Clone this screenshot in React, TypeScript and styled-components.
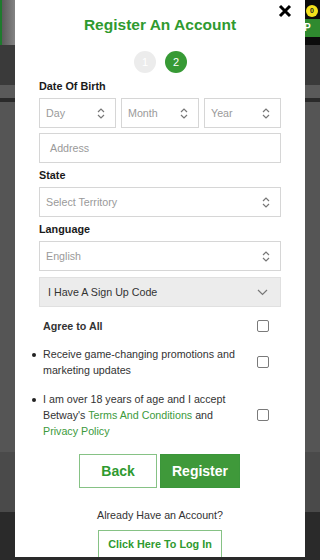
import React from "react";
import styled, { createGlobalStyle } from "styled-components";

const GlobalStyle = createGlobalStyle`
  html, body {
    margin: 0;
    padding: 0;
    background: #2a2a2a;
    font-family: "Liberation Sans", Arial, sans-serif;
  }
`;

const green = "#2f9a2f";

const Page = styled.div`
  position: relative;
  width: 320px;
  height: 560px;
  overflow: hidden;
  background: #2b2b2b;
`;

const Backdrop = styled.div`
  display: flex;
  flex-direction: column;
  height: 100%;
`;

const TopBar = styled.div`
  height: 45px;
  display: flex;
  justify-content: space-between;
  background: #0c0c0c;
`;

const LeftCard = styled.div`
  width: 15px;
  border-left: 2px solid #1d7a2d;
  background: linear-gradient(90deg, #5a5a5a, #8a8a8a);
`;

const JoinButton = styled.div`
  position: relative;
  width: 16px;
  margin-top: 19px;
  height: 18px;
  background: #2f8a2f;
  color: #fff;
  font-weight: bold;
  font-size: 10px;
  line-height: 18px;
`;

const Badge = styled.span`
  position: absolute;
  top: -14px;
  right: 2px;
  width: 12px;
  height: 12px;
  border-radius: 50%;
  background: #f4e21c;
  color: #222;
  font-size: 7px;
  line-height: 12px;
  text-align: center;
`;

const Band = styled.div<{ $h: number; $bg: string }>`
  height: ${({ $h }) => $h}px;
  background: ${({ $bg }) => $bg};
`;

const Modal = styled.div`
  position: absolute;
  top: 0;
  left: 15px;
  width: 290px;
  height: 557px;
  overflow: hidden;
  background: #fff;
  box-sizing: border-box;
  padding: 15px 24px 0;
`;

const Close = styled.button`
  position: absolute;
  top: 4px;
  right: 13px;
  width: 14px;
  height: 14px;
  padding: 0;
  border: 0;
  background: none;
  display: flex;
`;

const Title = styled.h1`
  margin: 0;
  font-size: 15.5px;
  line-height: 20px;
  font-weight: bold;
  color: ${green};
  text-align: center;
`;

const Steps = styled.div`
  margin-top: 16px;
  display: flex;
  justify-content: center;
  gap: 9px;
  padding-left: 1px;
`;

const Step = styled.span<{ $active?: boolean }>`
  width: 22px;
  height: 22px;
  border-radius: 50%;
  background: ${({ $active }) => ($active ? "#379a35" : "#ececec")};
  color: #fff;
  font-size: 11px;
  line-height: 22px;
  text-align: center;
`;

const Label = styled.div<{ $top?: number }>`
  margin-top: ${({ $top }) => $top ?? 4}px;
  margin-bottom: 4px;
  font-size: 10.8px;
  line-height: 16px;
  font-weight: bold;
  color: #1a1a1a;
`;

const Row = styled.div`
  display: grid;
  grid-template-columns: 77px 78px 77px;
  gap: 5px;
`;

const Field = styled.div<{ $top?: number; $pad?: number }>`
  margin-top: ${({ $top }) => $top ?? 0}px;
  height: 30px;
  box-sizing: border-box;
  border: 1px solid #d6d6d6;
  padding: 0 10px 0 ${({ $pad }) => $pad ?? 6}px;
  display: flex;
  align-items: center;
  justify-content: space-between;
  font-size: 10.7px;
  color: #9a9a9a;
`;

const CodeBox = styled(Field)`
  background: #ececec;
  border-color: #e0e0e0;
  color: #333;
  padding: 0 12px 0 8px;
`;

const Consents = styled.div`
  margin-top: 11px;
`;

const ConsentRow = styled.div<{ $top?: number }>`
  display: flex;
  align-items: center;
  justify-content: space-between;
  margin-top: ${({ $top }) => $top ?? 0}px;
  padding: 0 12px 0 4px;
`;

const ConsentText = styled.div<{ $bold?: boolean; $bullet?: boolean }>`
  position: relative;
  width: 205px;
  font-size: 10.7px;
  line-height: 16px;
  color: #333;
  font-weight: ${({ $bold }) => ($bold ? "bold" : "normal")};
  ${({ $bullet }) =>
    $bullet
      ? `&::before {
    content: "";
    position: absolute;
    left: -11px;
    top: 7px;
    width: 4px;
    height: 4px;
    border-radius: 50%;
    background: #222;
  }`
      : ""}
`;

const Link = styled.span`
  color: #3c9a3c;
`;

const Check = styled.span`
  width: 10px;
  height: 10px;
  border: 1px solid #7a7a7a;
  border-radius: 2px;
  flex-shrink: 0;
`;

const Buttons = styled.div`
  margin-top: 15px;
  display: flex;
  justify-content: center;
  gap: 3px;
  padding-right: 1px;
`;

const Btn = styled.button<{ $primary?: boolean; $w: number }>`
  width: ${({ $w }) => $w}px;
  height: 34px;
  box-sizing: border-box;
  border: 1px solid ${({ $primary }) => ($primary ? "#3b963a" : "#86c285")};
  background: ${({ $primary }) => ($primary ? "#3f993a" : "#fff")};
  color: ${({ $primary }) => ($primary ? "#fff" : green)};
  font-family: inherit;
  font-size: 14px;
  font-weight: bold;
  padding: 0;
`;

const Already = styled.div`
  margin-top: 19px;
  text-align: center;
  font-size: 10.7px;
  line-height: 16px;
  color: #333;
`;

const LoginWrap = styled.div`
  margin-top: 7px;
  display: flex;
  justify-content: center;
`;

const LoginBtn = styled.button`
  width: 124px;
  height: 30px;
  box-sizing: border-box;
  border: 1px solid #86c285;
  background: #fff;
  color: ${green};
  font-family: inherit;
  font-size: 10.8px;
  font-weight: bold;
  padding: 0 0 3px;
`;

const UpDown = () => (
  <svg width="8" height="11" viewBox="0 0 8 11" fill="none" stroke="#777" strokeWidth="1.2">
    <path d="M1 4 L4 1 L7 4" />
    <path d="M1 7 L4 10 L7 7" />
  </svg>
);

const ChevronDown = () => (
  <svg width="11" height="7" viewBox="0 0 11 7" fill="none" stroke="#777" strokeWidth="1.2">
    <path d="M1 1 L5.5 5.5 L10 1" />
  </svg>
);

const App = () => (
  <>
    <GlobalStyle />
    <Page>
      <Backdrop>
        <TopBar>
          <LeftCard />
          <JoinButton>
            P<Badge>0</Badge>
          </JoinButton>
        </TopBar>
        <Band $h={40} $bg="#3a3a3a" />
        <Band $h={13} $bg="#5a5a5a" />
        <Band $h={4} $bg="#2a2a2a" />
        <Band $h={350} $bg="#555" />
        <Band $h={60} $bg="#4a4a4a" />
        <Band $h={48} $bg="#2a2a2a" />
      </Backdrop>
      <Modal>
        <Close aria-label="close">
          <svg width="14" height="14" viewBox="0 0 14 14" stroke="#000" strokeWidth="3">
            <path d="M2 2 L12 12 M12 2 L2 12" />
          </svg>
        </Close>
        <Title>Register An Account</Title>
        <Steps>
          <Step>1</Step>
          <Step $active>2</Step>
        </Steps>
        <Label $top={5}>Date Of Birth</Label>
        <Row>
          <Field>
            Day <UpDown />
          </Field>
          <Field>
            Month <UpDown />
          </Field>
          <Field>
            Year <UpDown />
          </Field>
        </Row>
        <Field $top={5} $pad={10}>
          Address
        </Field>
        <Label>State</Label>
        <Field>
          Select Territory <UpDown />
        </Field>
        <Label>Language</Label>
        <Field>
          English <UpDown />
        </Field>
        <CodeBox $top={6}>
          I Have A Sign Up Code <ChevronDown />
        </CodeBox>
        <Consents>
          <ConsentRow>
            <ConsentText $bold>Agree to All</ConsentText>
            <Check />
          </ConsentRow>
          <ConsentRow $top={12}>
            <ConsentText $bullet>Receive game-changing promotions and marketing updates</ConsentText>
            <Check />
          </ConsentRow>
          <ConsentRow $top={13}>
            <ConsentText $bullet>
              I am over 18 years of age and I accept Betway's <Link>Terms And Conditions</Link> and{" "}
              <Link>Privacy Policy</Link>
            </ConsentText>
            <Check />
          </ConsentRow>
        </Consents>
        <Buttons>
          <Btn $w={78}>Back</Btn>
          <Btn $w={80} $primary>
            Register
          </Btn>
        </Buttons>
        <Already>Already Have an Account?</Already>
        <LoginWrap>
          <LoginBtn>Click Here To Log In</LoginBtn>
        </LoginWrap>
      </Modal>
    </Page>
  </>
);

export default App;
